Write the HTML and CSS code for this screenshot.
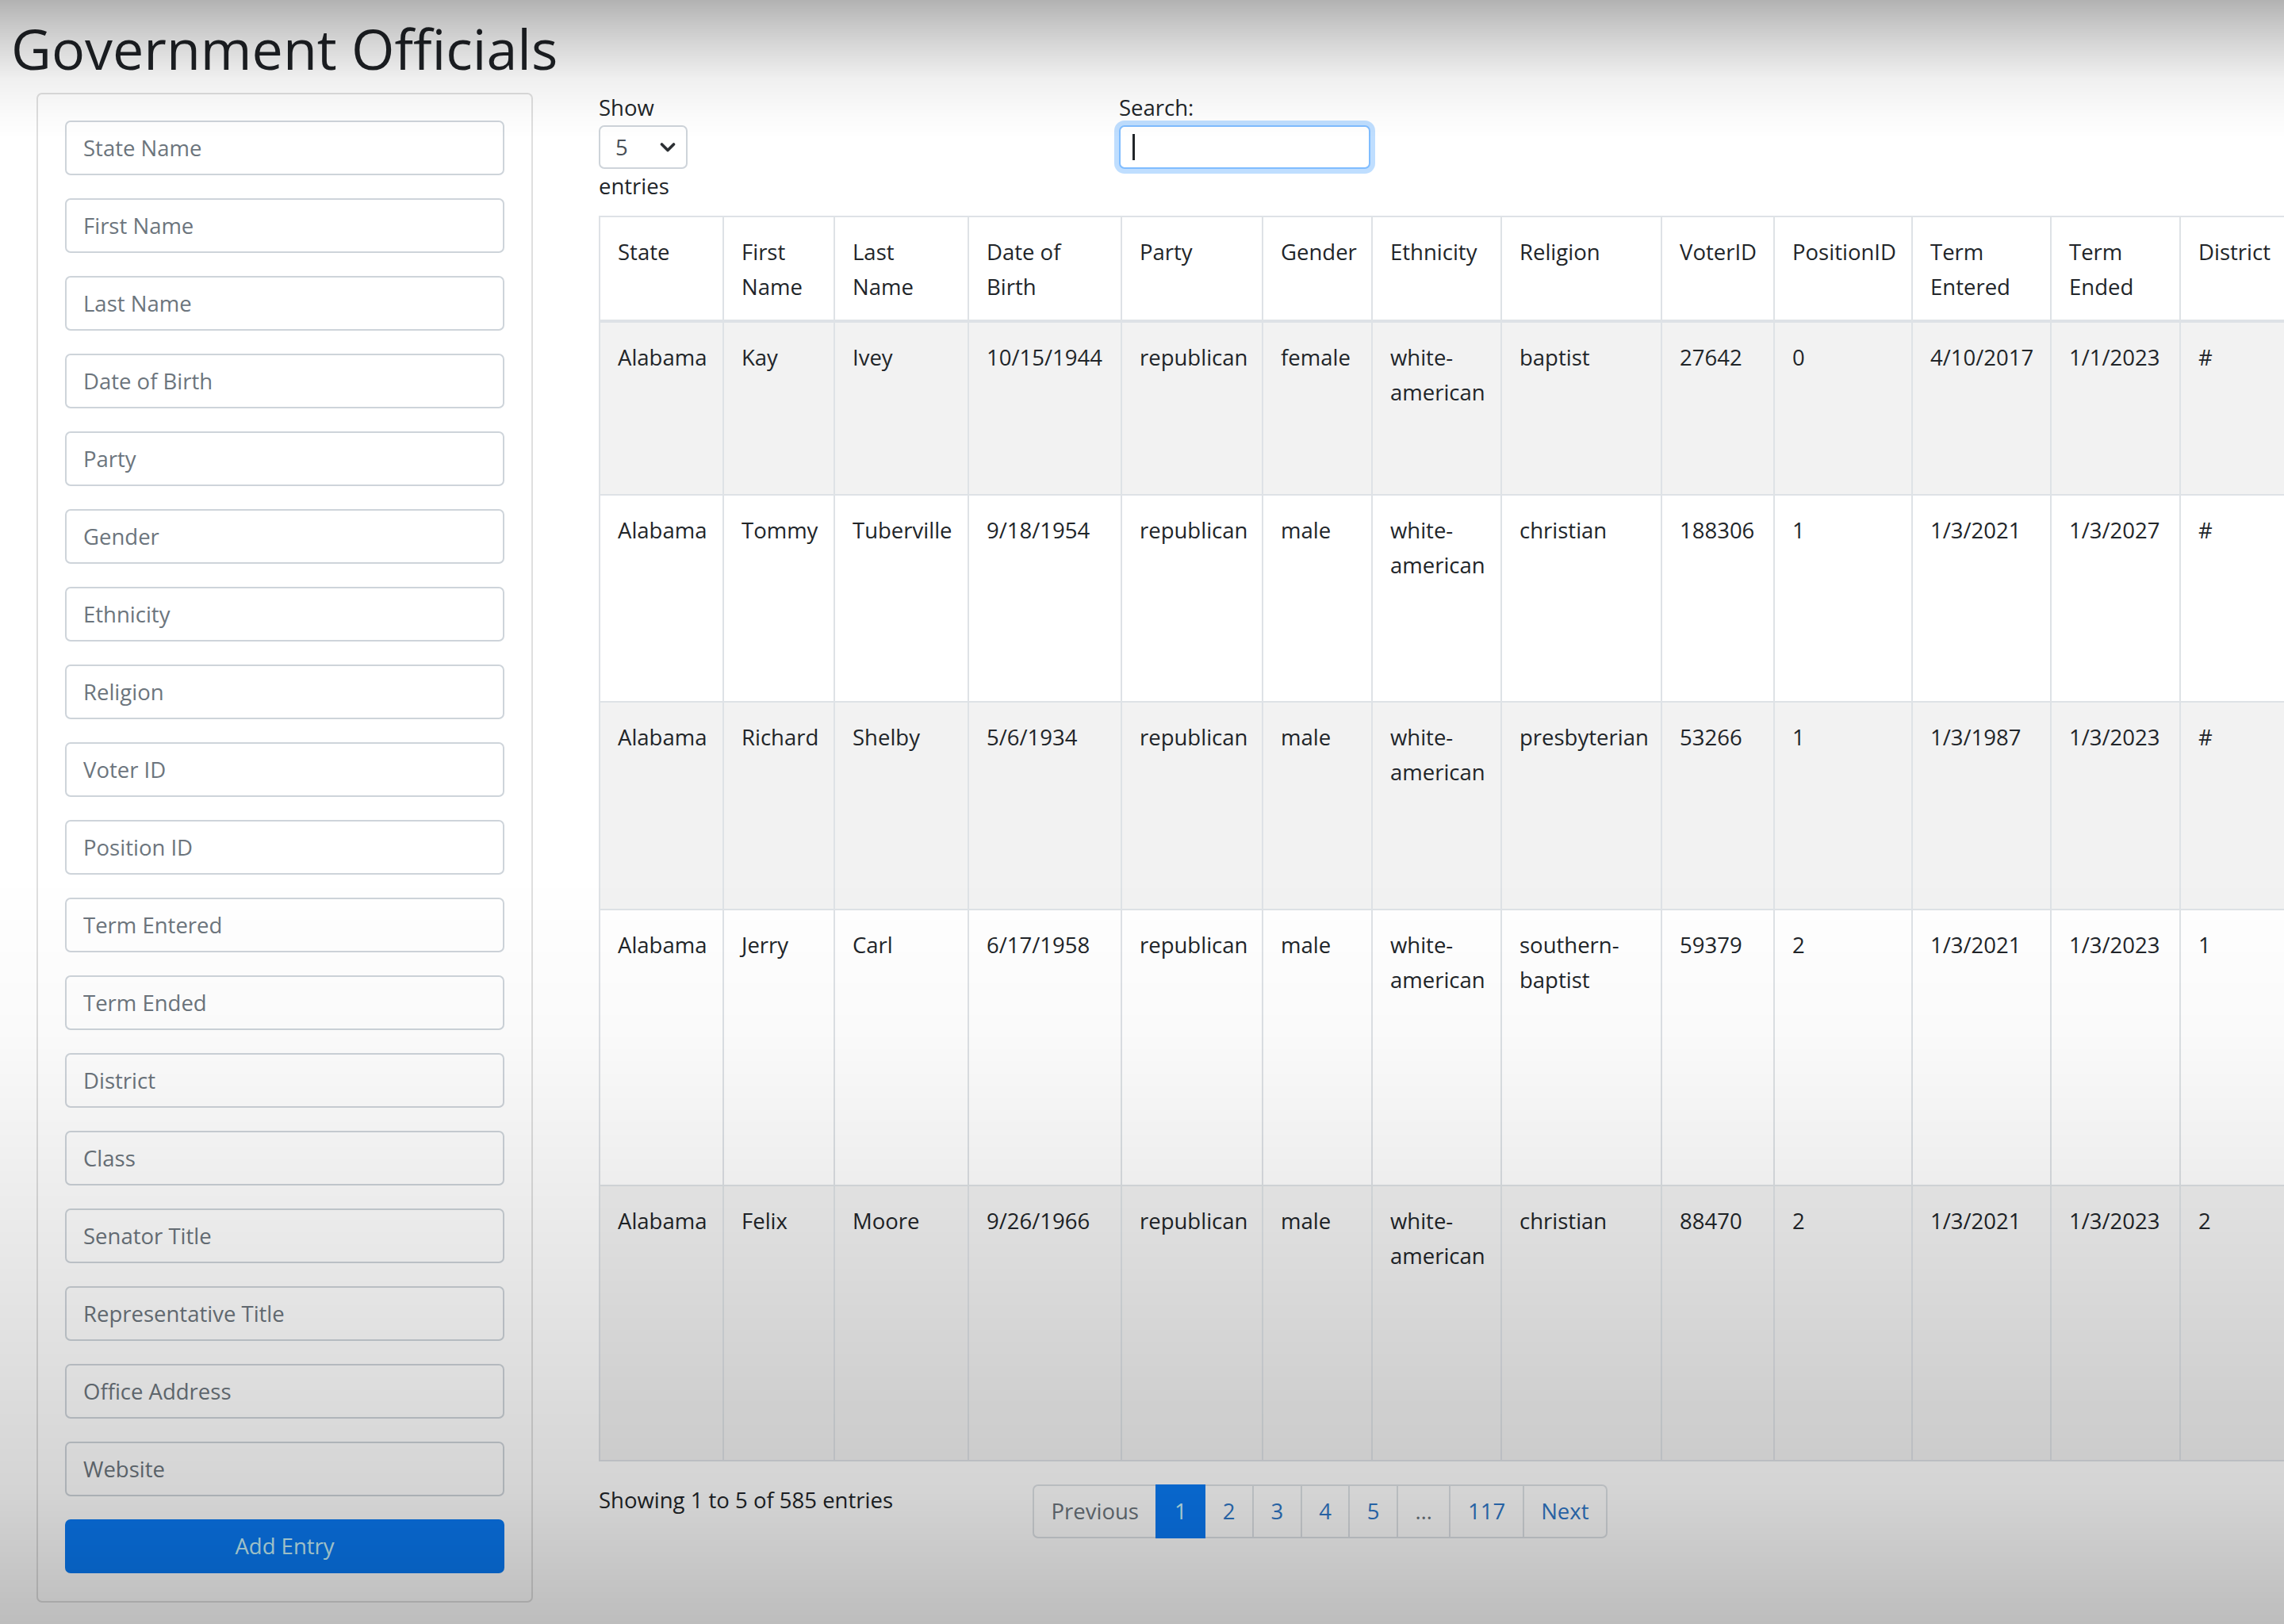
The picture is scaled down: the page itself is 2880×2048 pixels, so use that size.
FILE: index.html
```html
<!DOCTYPE html>
<html lang="en">
<head>
<meta charset="utf-8">
<title>Government Officials</title>
<link rel="stylesheet" href="styles.css">
</head>
<body>
<h1 class="page-title">Government Officials</h1>
<div class="layout">
  <form class="entry-card">
    <input class="field" type="text" placeholder="State Name">
    <input class="field" type="text" placeholder="First Name">
    <input class="field" type="text" placeholder="Last Name">
    <input class="field" type="text" placeholder="Date of Birth">
    <input class="field" type="text" placeholder="Party">
    <input class="field" type="text" placeholder="Gender">
    <input class="field" type="text" placeholder="Ethnicity">
    <input class="field" type="text" placeholder="Religion">
    <input class="field" type="text" placeholder="Voter ID">
    <input class="field" type="text" placeholder="Position ID">
    <input class="field" type="text" placeholder="Term Entered">
    <input class="field" type="text" placeholder="Term Ended">
    <input class="field" type="text" placeholder="District">
    <input class="field" type="text" placeholder="Class">
    <input class="field" type="text" placeholder="Senator Title">
    <input class="field" type="text" placeholder="Representative Title">
    <input class="field" type="text" placeholder="Office Address">
    <input class="field" type="text" placeholder="Website">
    <button class="btn-add" type="button">Add Entry</button>
  </form>

  <section class="officials">
    <div class="dt-toolbar">
      <div class="dt-length">
        <span class="dt-label">Show</span>
        <div class="select-box" role="combobox" aria-label="entries per page">
          <span class="select-value">5</span>
          <svg class="chev" viewBox="0 0 20 14" width="20" height="14" aria-hidden="true"><polyline points="2.5,3 10,10.5 17.5,3" fill="none" stroke="#2b2f33" stroke-width="3.6" stroke-linecap="round" stroke-linejoin="round"/></svg>
        </div>
        <span class="dt-label">entries</span>
      </div>
      <div class="dt-filter">
        <span class="dt-label">Search:</span>
        <div class="search-wrap">
          <input class="search-input" type="search" aria-label="Search">
          <span class="caret"></span>
        </div>
      </div>
    </div>

    <table class="officials-table">
      <colgroup>
        <col class="c-state"><col class="c-first"><col class="c-last"><col class="c-dob">
        <col class="c-party"><col class="c-gender"><col class="c-eth"><col class="c-rel">
        <col class="c-voter"><col class="c-pos"><col class="c-te"><col class="c-tend"><col class="c-dist">
      </colgroup>
      <thead>
        <tr>
          <th>State</th><th>First Name</th><th>Last Name</th><th>Date of Birth</th>
          <th>Party</th><th>Gender</th><th>Ethnicity</th><th>Religion</th>
          <th>VoterID</th><th>PositionID</th><th>Term Entered</th><th>Term Ended</th><th>District</th>
        </tr>
      </thead>
      <tbody>
        <tr>
          <td>Alabama</td><td>Kay</td><td>Ivey</td><td>10/15/1944</td><td>republican</td><td>female</td>
          <td>white-american</td><td>baptist</td><td>27642</td><td>0</td><td>4/10/2017</td><td>1/1/2023</td><td>#</td>
        </tr>
        <tr>
          <td>Alabama</td><td>Tommy</td><td>Tuberville</td><td>9/18/1954</td><td>republican</td><td>male</td>
          <td>white-american</td><td>christian</td><td>188306</td><td>1</td><td>1/3/2021</td><td>1/3/2027</td><td>#</td>
        </tr>
        <tr>
          <td>Alabama</td><td>Richard</td><td>Shelby</td><td>5/6/1934</td><td>republican</td><td>male</td>
          <td>white-american</td><td>presbyterian</td><td>53266</td><td>1</td><td>1/3/1987</td><td>1/3/2023</td><td>#</td>
        </tr>
        <tr>
          <td>Alabama</td><td>Jerry</td><td>Carl</td><td>6/17/1958</td><td>republican</td><td>male</td>
          <td>white-american</td><td>southern-baptist</td><td>59379</td><td>2</td><td>1/3/2021</td><td>1/3/2023</td><td>1</td>
        </tr>
        <tr>
          <td>Alabama</td><td>Felix</td><td>Moore</td><td>9/26/1966</td><td>republican</td><td>male</td>
          <td>white-american</td><td>christian</td><td>88470</td><td>2</td><td>1/3/2021</td><td>1/3/2023</td><td>2</td>
        </tr>
      </tbody>
    </table>

    <div class="dt-footer">
      <div class="dt-info">Showing 1 to 5 of 585 entries</div>
      <ul class="pagination">
        <li class="page-item disabled"><span class="page-link">Previous</span></li>
        <li class="page-item active"><span class="page-link">1</span></li>
        <li class="page-item"><span class="page-link">2</span></li>
        <li class="page-item"><span class="page-link">3</span></li>
        <li class="page-item"><span class="page-link">4</span></li>
        <li class="page-item"><span class="page-link">5</span></li>
        <li class="page-item disabled"><span class="page-link">…</span></li>
        <li class="page-item"><span class="page-link">117</span></li>
        <li class="page-item"><span class="page-link">Next</span></li>
      </ul>
    </div>
  </section>
</div>
</body>
</html>
```

FILE: styles.css
```css
html {
  margin: 0;
  height: 2048px;
  overflow: hidden;
}

body {
  margin: 0;
  width: 2880px;
  height: 2048px;
  overflow: hidden;
  position: relative;
  background: #ffffff;
  color: #212529;
  font-family: "Open Sans", "Noto Sans", "DejaVu Sans", sans-serif;
  font-size: 27.5px;
  line-height: 44px;
}

/* video-frame vignette lying over the whole page */
body::after {
  content: "";
  position: fixed;
  left: 0;
  top: 0;
  width: 2880px;
  height: 2048px;
  pointer-events: none;
  z-index: 50;
  background: linear-gradient(to bottom,
    rgba(0, 0, 0, 0.30) 0px,
    rgba(0, 0, 0, 0.22) 30px,
    rgba(0, 0, 0, 0.15) 60px,
    rgba(0, 0, 0, 0.06) 100px,
    rgba(0, 0, 0, 0.015) 150px,
    rgba(0, 0, 0, 0) 175px,
    rgba(0, 0, 0, 0) 1100px,
    rgba(0, 0, 0, 0.02) 1300px,
    rgba(0, 0, 0, 0.07) 1500px,
    rgba(0, 0, 0, 0.12) 1700px,
    rgba(0, 0, 0, 0.17) 1880px,
    rgba(0, 0, 0, 0.26) 2048px);
}

.page-title {
  margin: 19px 0 11px 14px;
  font-size: 70px;
  line-height: 84px;
  font-weight: 500;
  color: #1e2125;
}

.layout {
  display: flex;
  align-items: flex-start;
}

/* ---------- entry form ---------- */
.entry-card {
  flex: none;
  box-sizing: border-box;
  width: 626px;
  margin: 3px 0 0 46px;
  padding: 33px 34px 35px;
  border: 2px solid #dfdfdf;
  border-radius: 7px;
  background: #ffffff;
  display: flex;
  flex-direction: column;
  gap: 29px;
}

.field {
  box-sizing: border-box;
  height: 69px;
  margin: 0;
  padding: 0 21px;
  border: 2px solid #ced4da;
  border-radius: 7px;
  background: #ffffff;
  color: #495057;
  font: inherit;
}

.field::placeholder {
  color: #6c757d;
  opacity: 1;
}

.btn-add {
  height: 68px;
  margin: 0;
  border: 2px solid #0a7bf5;
  border-radius: 7px;
  background: #0a7bf5;
  color: #c8f2fa;
  font: inherit;
  cursor: pointer;
}

/* ---------- data table area ---------- */
.officials {
  flex: none;
  width: 1258px;
  margin-left: 83px;
}

.dt-toolbar {
  display: flex;
}

.dt-length {
  width: 656px;
  display: flex;
  flex-direction: column;
  align-items: flex-start;
}

.dt-filter {
  display: flex;
  flex-direction: column;
  align-items: flex-start;
}

.dt-label {
  display: block;
  height: 44px;
}

.select-box {
  box-sizing: border-box;
  width: 112px;
  height: 55px;
  padding: 0 13px 0 19px;
  border: 2px solid #ced4da;
  border-radius: 7px;
  background: #ffffff;
  color: #495057;
  display: flex;
  align-items: center;
  justify-content: space-between;
}

.chev {
  display: block;
}

.search-wrap {
  position: relative;
}

.search-input {
  display: block;
  box-sizing: border-box;
  width: 317px;
  height: 55px;
  margin: 0;
  padding: 0 13px;
  border: 2px solid #80bdff;
  border-radius: 7px;
  background: #ffffff;
  box-shadow: 0 0 0 6px rgba(0, 123, 255, 0.25);
  outline: none;
  font: inherit;
}

.caret {
  position: absolute;
  left: 17px;
  top: 11px;
  width: 3px;
  height: 33px;
  background: #212529;
}

.officials-table {
  margin-top: 15px;
  width: 2253px;
  table-layout: fixed;
  border-collapse: collapse;
  background: #ffffff;
}

.c-state { width: 156px; }
.c-first { width: 140px; }
.c-last { width: 169px; }
.c-dob { width: 193px; }
.c-party { width: 178px; }
.c-gender { width: 138px; }
.c-eth { width: 163px; }
.c-rel { width: 202px; }
.c-voter { width: 142px; }
.c-pos { width: 174px; }
.c-te { width: 175px; }
.c-tend { width: 163px; }
.c-dist { width: 260px; }

.officials-table th,
.officials-table td {
  padding: 22px;
  border: 2px solid #dee2e6;
  text-align: left;
  vertical-align: top;
  font-weight: 400;
}

.officials-table th {
  padding-top: 22px;
  padding-bottom: 19px;
}

.officials-table thead th {
  border-bottom-width: 4px;
}

.officials-table thead tr { height: 131px; }
.officials-table tbody tr:nth-child(1) { height: 219px; }
.officials-table tbody tr:nth-child(2) { height: 261px; }
.officials-table tbody tr:nth-child(3) { height: 262px; }
.officials-table tbody tr:nth-child(4) { height: 348px; }
.officials-table tbody tr:nth-child(5) { height: 347px; }

.officials-table tbody tr:nth-child(odd) {
  background: #f2f2f2;
}

/* ---------- footer: info + pagination ---------- */
.dt-footer {
  display: flex;
  margin-top: 27px;
}

.dt-info {
  flex: none;
  width: 547px;
}

.pagination {
  display: flex;
  list-style: none;
  margin: 2px 0 0;
  padding: 0;
}

.page-item {
  margin-left: -2px;
}

.page-item:first-child {
  margin-left: 0;
}

.page-link {
  display: block;
  box-sizing: border-box;
  height: 68px;
  padding: 0 21.5px;
  line-height: 64px;
  border: 2px solid #dee2e6;
  background: #ffffff;
  color: #2f78c8;
}

.page-item:first-child .page-link {
  border-radius: 7px 0 0 7px;
}

.page-item:last-child .page-link {
  border-radius: 0 7px 7px 0;
}

.page-item.active .page-link {
  position: relative;
  background: #0a7bf5;
  border-color: #0a7bf5;
  color: #c8f2fa;
}

.page-item.disabled .page-link {
  color: #6c757d;
}
```
